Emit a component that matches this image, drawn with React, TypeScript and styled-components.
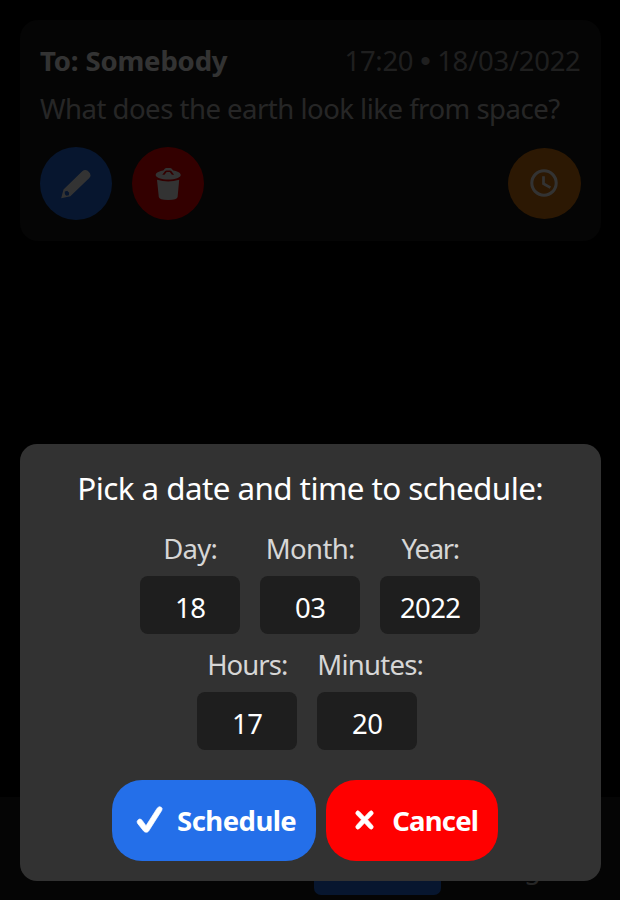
import React from 'react';
import styled, { createGlobalStyle } from 'styled-components';

const GlobalStyle = createGlobalStyle`
  *, *::before, *::after { box-sizing: border-box; }
  body {
    margin: 0;
    background: #000;
    font-family: "Noto Sans", "Open Sans", sans-serif;
    font-size: 27.5px;
    line-height: 40px;
    color: #fff;
    overflow: hidden;
  }
`;

const Screen = styled.div`
  height: 900px;
  display: flex;
  flex-direction: column;
  justify-content: space-between;
  overflow: hidden;
`;

const Card = styled.article`
  margin: 20px 19.5px 0 20px;
  padding: 21px 20px 20.5px;
  border-radius: 18px;
  background: #191919;
`;

const CardHeader = styled.header`
  display: flex;
  justify-content: space-between;
  white-space: nowrap;
`;

const Recipient = styled.strong`
  color: #fff;
  font-weight: 700;
  letter-spacing: -0.15px;
`;

const Timestamp = styled.time`
  color: #9b9b9b;
  letter-spacing: -0.3px;
`;

const Bullet = styled.span`
  font-family: "Liberation Sans", sans-serif;
  font-size: 30px;
  line-height: 0;
`;

const Message = styled.p`
  margin: 8px 0 18px;
  color: #bebebe;
  letter-spacing: -0.5px;
  white-space: nowrap;
`;

const Actions = styled.div`
  display: flex;
  align-items: center;
  gap: 20px;
`;

const RoundButton = styled.button<{ $color: string; $end?: boolean }>`
  display: grid;
  place-items: center;
  width: ${(p) => (p.$end ? 73 : 72)}px;
  height: ${(p) => (p.$end ? 71 : 73)}px;
  margin-left: ${(p) => (p.$end ? 'auto' : '0')};
  padding: 0 0 1px;
  border: 0;
  border-radius: 50%;
  background: ${(p) => p.$color};
  color: #fff;
`;

const NavBar = styled.nav`
  display: flex;
  justify-content: flex-end;
  align-items: flex-end;
  height: 103px;
  padding: 0 67px 5px 0;
  background: #191919;
`;

const NavTab = styled.a<{ $active?: boolean }>`
  display: flex;
  align-items: center;
  justify-content: center;
  width: ${(p) => (p.$active ? '127px' : 'auto')};
  height: ${(p) => (p.$active ? '78px' : '54px')};
  margin-right: ${(p) => (p.$active ? '12px' : '0')};
  border-radius: 7px;
  background: ${(p) => (p.$active ? '#246fe9' : 'transparent')};
  color: #bebebe;
  letter-spacing: -0.6px;
`;

const Backdrop = styled.div`
  position: fixed;
  inset: 0;
  display: flex;
  align-items: flex-end;
  padding: 0 19.5px 19px 20px;
  background: rgba(0, 0, 0, 0.8);
`;

const Dialog = styled.section`
  flex: 1;
  padding: 20px 0;
  border-radius: 17px;
  background: #323232;
`;

const Title = styled.h1`
  margin: 0 0 16px;
  font-size: 31.4px;
  font-weight: 400;
  line-height: 48px;
  letter-spacing: -0.57px;
  text-align: center;
`;

const FieldRow = styled.div`
  display: flex;
  justify-content: center;
  gap: 20px;
  & + & { margin-top: 10px; }
`;

const Field = styled.label`
  display: flex;
  flex-direction: column;
  gap: 7px;
  padding-top: 1px;
  color: #d6d6d6;
`;

const Caption = styled.span<{ $tracking: number }>`
  min-width: 100px;
  text-align: center;
  letter-spacing: ${(p) => p.$tracking}px;
`;

const NumberInput = styled.input`
  width: 100px;
  height: 58px;
  padding: 4px 0 0;
  border: 0;
  border-radius: 8px;
  outline: 0;
  background: #1e1e1e;
  color: #fff;
  font: inherit;
  letter-spacing: -0.6px;
  text-align: center;
`;

const DialogActions = styled.footer`
  display: flex;
  justify-content: center;
  margin-top: 30px;
`;

const PillButton = styled.button<{ $color: string; $width: number; $tracking: number }>`
  display: flex;
  align-items: center;
  justify-content: space-between;
  width: ${(p) => p.$width}px;
  height: 81px;
  margin-right: 10px;
  padding: 0 20px;
  border: 0;
  border-radius: 30px;
  background: ${(p) => p.$color};
  color: #fff;
  font: inherit;
  font-weight: 700;
  letter-spacing: ${(p) => p.$tracking}px;
`;

const PencilIcon = () => (
  <svg width="36" height="36" viewBox="0 0 36 36" fill="currentColor">
    <path
      fillRule="evenodd"
      d="M3.2 33.3 5.5 24.6 24.3 6.3Q26.8 3.8 29.7 5.8L32 8.3Q33.4 10.8 31.3 13L12.3 31.3ZM6.8 26.4Q6.3 29.6 8.6 30.8L10.9 30.2 11.2 27.8 9.2 25.8Z"
    />
  </svg>
);

const TrashIcon = () => (
  <svg width="36" height="36" viewBox="0 0 36 36" fill="currentColor">
    <path
      fillRule="evenodd"
      d="M13.3 5.6 15 3.6Q15.5 3 16.3 3H20.2Q21 3 21.5 3.6L23.2 5.6C27.7 6.3 30.7 8 30.7 10 30.7 12.6 25.2 14.6 18.2 14.6S5.7 12.6 5.7 10C5.7 8 8.8 6.3 13.3 5.6ZM12.3 9.8H14.5L16.6 7.1H19.8L21.9 9.8H24.1L21.3 6.1Q20.8 5.4 20 5.4H16.4Q15.6 5.4 15.1 6.1Z"
    />
    <path d="M7 14.8Q18.2 18.4 29.2 14.8L27.6 32Q27.2 35 18.2 35T8.8 32Z" />
  </svg>
);

const ClockIcon = () => (
  <svg width="36" height="36" viewBox="0 0 36 36" fill="none" stroke="currentColor" strokeWidth="3">
    <circle cx="18" cy="18" r="12.2" />
    <path d="M17.5 11.2V18.7L24.4 22.6" strokeWidth="2.7" />
  </svg>
);

const CheckIcon = () => (
  <svg width="36" height="36" viewBox="0 0 36 36" fill="currentColor" stroke="currentColor" strokeWidth="0.7">
    <path d="M5.8 17.2Q7.9 14.6 10 17.2L14 22.8 25.2 5.2Q27 2.7 29.2 4.2 30.9 5.4 29.7 7.5L16.7 28Q15.8 29.3 14.3 29.3T11.8 28.2L5.6 20.4Q4.4 18.7 5.8 17.2Z" />
  </svg>
);

const CrossIcon = () => (
  <svg width="36" height="36" viewBox="0 0.5 36 36" fill="currentColor" stroke="currentColor" strokeWidth="0.8">
    <path d="M10.1 9.5Q11.7 7.2 13.5 9.2L18.5 14.5 23.5 9.2Q25.3 7.2 26.9 9.5 27.7 10.9 26.4 12.3L21.5 17.3 26.4 22.7Q27.8 24.2 26.8 25.7 25.3 27.6 23.4 25.7L18.5 20.4 13.6 25.7Q11.7 27.6 10.2 25.7 9.2 24.2 10.6 22.7L15.5 17.3 10.6 12.3Q9.3 10.9 10.1 9.5Z" />
  </svg>
);

const dateFields = [
  { label: 'Day:', value: '18', tracking: -0.7 },
  { label: 'Month:', value: '03', tracking: -0.65 },
  { label: 'Year:', value: '2022', tracking: -1.3 },
];

const timeFields = [
  { label: 'Hours:', value: '17', tracking: -0.95 },
  { label: 'Minutes:', value: '20', tracking: -0.75 },
];

const Fields = ({ fields }: { fields: typeof dateFields }) => (
  <FieldRow>
    {fields.map((f) => (
      <Field key={f.label}>
        <Caption $tracking={f.tracking}>{f.label}</Caption>
        <NumberInput defaultValue={f.value} inputMode="numeric" />
      </Field>
    ))}
  </FieldRow>
);

export default function App() {
  return (
    <>
      <GlobalStyle />
      <Screen>
        <Card>
          <CardHeader>
            <Recipient>To: Somebody</Recipient>
            <Timestamp>17:20 <Bullet>•</Bullet> 18/03/2022</Timestamp>
          </CardHeader>
          <Message>What does the earth look like from space?</Message>
          <Actions>
            <RoundButton $color="#246fe9" aria-label="Edit"><PencilIcon /></RoundButton>
            <RoundButton $color="#ff0000" aria-label="Delete"><TrashIcon /></RoundButton>
            <RoundButton $color="#dc780f" $end aria-label="Schedule"><ClockIcon /></RoundButton>
          </Actions>
        </Card>
        <NavBar>
          <NavTab $active />
          <NavTab>Settings</NavTab>
        </NavBar>
      </Screen>
      <Backdrop>
        <Dialog role="dialog">
          <Title>Pick a date and time to schedule:</Title>
          <Fields fields={dateFields} />
          <Fields fields={timeFields} />
          <DialogActions>
            <PillButton $color="#246fe9" $width={204} $tracking={-0.54}>
              <CheckIcon />
              Schedule
            </PillButton>
            <PillButton $color="#ff0000" $width={172} $tracking={-0.8}>
              <CrossIcon />
              Cancel
            </PillButton>
          </DialogActions>
        </Dialog>
      </Backdrop>
    </>
  );
}
